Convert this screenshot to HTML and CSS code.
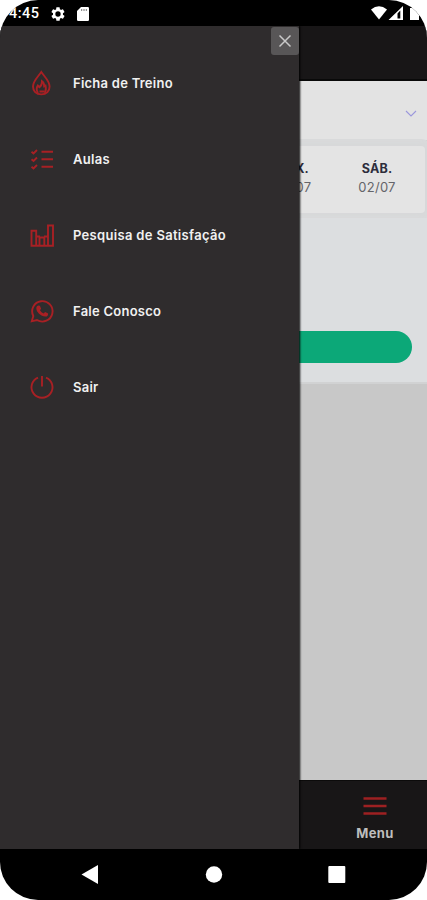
FILE: index.html
```html
<!DOCTYPE html>
<html lang="pt-BR">
<head>
<meta charset="utf-8">
<meta name="viewport" content="width=device-width, initial-scale=1">
<title>Menu</title>
<link rel="stylesheet" href="styles.css">
</head>
<body>
<div class="phone">
  <header class="status">
    <span class="clock">4:45</span>
    <svg class="gear" width="16" height="16" viewBox="0 0 24 24"><path fill="#fff" fill-rule="evenodd" d="M19.4 13a7.500 7.500 0 0 0 0-2l2.100-1.650a.5.5 0 0 0 .12-.64l-2-3.460a.5.5 0 0 0-.61-.22l-2.490 1a7.300 7.300 0 0 0-1.690-.98l-.38-2.650A.49.49 0 0 0 14 2h-4a.49.49 0 0 0-.49.42l-.38 2.650c-.61.25-1.170.59-1.690.98l-2.490-1a.5.5 0 0 0-.61.22l-2 3.460a.49.49 0 0 0 .12.64L4.570 11a7.900 7.900 0 0 0 0 2l-2.110 1.650a.5.5 0 0 0-.12.64l2 3.460c.12.22.39.3.61.22l2.490-1c.52.4 1.080.73 1.690.98l.38 2.650c.3.24.24.42.49.42h4c.25 0 .46-.18.49-.42l.38-2.650c.61-.25 1.170-.59 1.690-.98l2.490 1c.23.09.49 0 .61-.22l2-3.460a.5.5 0 0 0-.12-.64zM12 16a4 4 0 1 1 0-8 4 4 0 0 1 0 8z"/></svg>
    <svg class="card" width="12" height="14" viewBox="0 0 12 14"><path fill="#fff" d="M4 0h6.800Q12 0 12 1.200v11.600Q12 14 10.800 14H1.200Q0 14 0 12.800V4z"/><path stroke="#777" d="M4.700 2v2M7 2v2M9.300 2v2"/></svg>
    <svg class="signals" width="56" height="16" viewBox="0 0 56 16"><path fill="#fff" d="M0 4.500Q8 -1.800 16 4.500L8 14.500z"/><path fill="#fff" fill-rule="evenodd" d="M17.500 15L32 1v14zM26.500 8.500v5h2.800V5.500z"/><path fill="#fff" d="M39 3h2V1.500h5V3h2v12h-9z"/></svg>
  </header>
  <main class="app">
    <div class="topbar"></div>
    <section class="select"><svg width="12" height="8" viewBox="0 0 12 8"><path d="M1 1l5 5 5-5" fill="none" stroke="#9c98dc" stroke-width="1.100"/></svg></section>
    <section class="days">
      <div class="day"><b>SEX.</b><span>01/07</span></div>
      <div class="day"><b>SÁB.</b><span>02/07</span></div>
    </section>
    <section class="panel"><div class="action"></div></section>
    <footer class="tabbar">
      <div class="tab">
        <svg width="24" height="20" viewBox="0 0 24 20"><path d="M.5 2.500h23M.5 10h23M.5 17.500h23" stroke="#9d2022" stroke-width="2.500"/></svg>
        <span>Menu</span>
      </div>
    </footer>
    <aside class="drawer">
      <button class="close" aria-label="Fechar"><svg width="14" height="14" viewBox="0 0 14 14"><path d="M1.500 1.500l11 11M12.500 1.500l-11 11" stroke="#c9c9c9" stroke-width="1.500"/></svg></button>
      <nav class="menu">
        <a class="item"><svg viewBox="0 0 26 26"><path d="M12.300 2C9.300 6.500 4 11 4 16.400c0 4.400 3 8 8.300 8s8.300-3.600 8.300-8C20.600 11 15.300 6.500 12.300 2z"/><path d="M9 23C7 20 7.500 17.500 8.800 15.500l1.600 1.700c2-1.500 2.700-3.500 2.600-6 2.200 1.500 2.300 3 2.200 5l1.300-.6c.8 3 .5 5.200-.9 7.400M10.500 21.500h4.500"/></svg><span class="label training">Ficha de Treino</span></a>
        <a class="item"><svg viewBox="0 0 26 26"><path d="M2.500 5.800l2 1.600L8 4M2.500 13.300l2 1.600L8 11.500M2.500 20.800l2 1.600L8 19M12.500 5.800H24M12.500 13.300H24M12.500 20.800H24"/></svg><span class="label classes">Aulas</span></a>
        <a class="item"><svg viewBox="0 0 26 26"><path d="M2.500 8.700h4.700v15H2.500zM10.500 15.500h4.800v8.200h-4.800zM19 3.500h5v20.200h-5zM7 23.700h12M7.500 14.500h3.500M15 14.500h3.500"/></svg><span class="label survey">Pesquisa de Satisfação</span></a>
        <a class="item"><svg viewBox="0 0 26 26"><path d="M4.300 18A10.200 10.200 0 1 1 8 22l-5.200 1.300z"/><path class="solid" d="M9.200 7.500l1.700.3 1.200 3-1.100 1.500q1.300 2.200 3.700 3.200l1.400-1.500 3 1.400q.2 2.900-2.600 3.200C12 18.700 7 14 7.300 9.800q.3-1.800 1.900-2.300z"/></svg><span class="label contact">Fale Conosco</span></a>
        <a class="item"><svg viewBox="0 0 26 26"><path d="M9 3.600a10.500 10.500 0 1 0 8 0M13 2v10.500"/></svg><span class="label exit">Sair</span></a>
      </nav>
    </aside>
  </main>
  <footer class="system">
    <svg width="427" height="51" viewBox="0 1 427 51"><path d="M98 17v19L81.500 26.500z" fill="#fff"/><circle cx="214" cy="26.500" r="8.200" fill="#fff"/><rect x="328.300" y="18" width="17" height="17" rx="1" fill="#fff"/></svg>
  </footer>
</div>
</body>
</html>
```
FILE: styles.css
```css
* { box-sizing: border-box; }
body { margin: 0; background: #fff; font-family: Inter, Roboto, sans-serif; }
.phone { width: 427px; height: 900px; display: grid; grid-template-rows: 26px 823px 51px; overflow: hidden; border-radius: 38px; background: #000; }
.status { display: flex; align-items: center; color: #fff; }
.clock { width: 42px; padding: 2px 0 0 9px; font: 500 14.500px/26px Roboto, sans-serif; letter-spacing: .45px; }
.gear { margin-left: 8px; margin-top: 1px; }
.card { margin-left: 11px; margin-top: 2px; }
.signals { margin-left: auto; margin-top: 0; }
.app { position: relative; display: flex; flex-direction: column; background: #c8c8c8; overflow: hidden; }
.topbar { height: 55px; background: #181617; border-bottom: 2px solid #090909; }
.select { height: 59px; background: #e3e3e3; display: flex; align-items: center; justify-content: flex-end; padding: 7px 10px 0 0; }
.days { height: 67px; margin: 6px 2px 0 0; background: #e4e4e4; border-radius: 4px; display: flex; justify-content: flex-end; padding-right: 10px; box-shadow: 0 0 6px #d5d6d8, 0 0 0 7px #d9dadb; }
.day { width: 76px; padding-top: 14px; text-align: center; color: #2d2d3c; font-size: 12.500px; line-height: 17px; }
.day b { display: block; font-weight: 700; letter-spacing: .2px; }
.day span { display: block; margin-top: 2px; color: #64656a; font-size: 13px; letter-spacing: .25px; }
.day:first-child { margin-right: 7px; }
.panel { height: 166px; margin-top: 5px; background: #dcdee0; border-bottom: 2px solid #d1d2d3; padding: 113px 15px 0; }
.action { height: 32px; border-radius: 16px; background: #0ca878; }
.tabbar { height: 69px; margin-top: auto; background: #181617; border-top: 1px solid #0c0b0b; display: flex; justify-content: flex-end; }
.tab { width: 104px; display: flex; flex-direction: column; align-items: center; padding-top: 15px; color: #bdbdbd; font-size: 13px; line-height: 18px; font-weight: 700; }
.tab span { margin-top: 8px; letter-spacing: .35px; }
.drawer { position: absolute; inset: 0 auto 0 0; width: 299px; background: #2f2c2d; box-shadow: 1px 0 2px #000; }
.close { display: flex; align-items: center; justify-content: center; width: 28px; height: 28px; margin: 1px 0 0 auto; padding: 0; border: 0; border-radius: 3px; background: #585657; }
.menu { display: flex; flex-direction: column; margin-top: -10px; }
.item { height: 76px; display: flex; align-items: center; gap: 18px; padding-left: 29px; color: #f1f1f1; font-size: 13px; font-weight: 600; white-space: nowrap; }
.training { letter-spacing: .25px; }
.classes { letter-spacing: .3px; }
.survey { letter-spacing: .32px; }
.contact { letter-spacing: .25px; }
.exit { letter-spacing: .25px; }
.item svg { width: 26px; height: 26px; fill: none; stroke: #a82024; stroke-width: 1.900; }
.item .solid { fill: #a82024; stroke: none; }
```
